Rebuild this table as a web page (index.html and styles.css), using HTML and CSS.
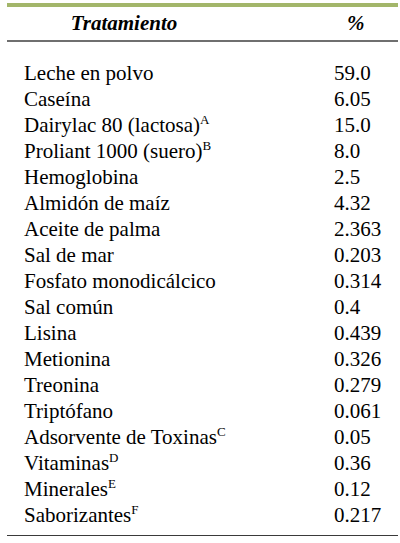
FILE: index.html
```html
<!DOCTYPE html>
<html lang="es">
<head>
<meta charset="utf-8">
<link rel="stylesheet" href="styles.css">
</head>
<body>
<div class="table">
  <div class="head">
    <div class="h-name">Tratamiento</div>
    <div class="h-val">%</div>
  </div>
  <div class="body">
    <div class="row"><span class="name">Leche en polvo</span><span class="val">59.0</span></div>
    <div class="row"><span class="name">Caseína</span><span class="val">6.05</span></div>
    <div class="row"><span class="name">Dairylac 80 (lactosa)<sup>A</sup></span><span class="val">15.0</span></div>
    <div class="row"><span class="name">Proliant 1000 (suero)<sup>B</sup></span><span class="val">8.0</span></div>
    <div class="row"><span class="name">Hemoglobina</span><span class="val">2.5</span></div>
    <div class="row"><span class="name">Almidón de maíz</span><span class="val">4.32</span></div>
    <div class="row"><span class="name">Aceite de palma</span><span class="val">2.363</span></div>
    <div class="row"><span class="name">Sal de mar</span><span class="val">0.203</span></div>
    <div class="row"><span class="name">Fosfato monodicálcico</span><span class="val">0.314</span></div>
    <div class="row"><span class="name">Sal común</span><span class="val">0.4</span></div>
    <div class="row"><span class="name">Lisina</span><span class="val">0.439</span></div>
    <div class="row"><span class="name">Metionina</span><span class="val">0.326</span></div>
    <div class="row"><span class="name">Treonina</span><span class="val">0.279</span></div>
    <div class="row"><span class="name">Triptófano</span><span class="val">0.061</span></div>
    <div class="row"><span class="name">Adsorvente de Toxinas<sup>C</sup></span><span class="val">0.05</span></div>
    <div class="row"><span class="name">Vitaminas<sup>D</sup></span><span class="val">0.36</span></div>
    <div class="row"><span class="name">Minerales<sup>E</sup></span><span class="val">0.12</span></div>
    <div class="row"><span class="name">Saborizantes<sup>F</sup></span><span class="val">0.217</span></div>
  </div>
</div>
</body>
</html>
```
FILE: styles.css
```css
html, body {
  margin: 0;
  padding: 0;
  background: #ffffff;
}
body {
  font-family: "Liberation Serif", "Times New Roman", serif;
  color: #000000;
}
.table {
  margin: 3px 2px 0 7px;
  border-top: 4px solid #a3b66a;
  border-bottom: 1px solid #3a3a3a;
}
.head {
  display: grid;
  grid-template-columns: 234px 1fr;
  height: 33px;
  align-items: center;
  border-bottom: 2px solid #6f6f6f;
  font-weight: bold;
  font-style: italic;
  font-size: 21px;
}
.h-name {
  text-align: center;
}
.h-val {
  padding-left: 106px;
}
.body {
  padding: 18px 0 7px;
}
.row {
  display: grid;
  grid-template-columns: 327px 1fr;
  height: 26px;
  align-items: center;
  font-size: 21px;
  line-height: 26px;
}
.name {
  padding-left: 17px;
}
sup {
  font-size: 13px;
  line-height: 0;
  vertical-align: 8px;
}
```
